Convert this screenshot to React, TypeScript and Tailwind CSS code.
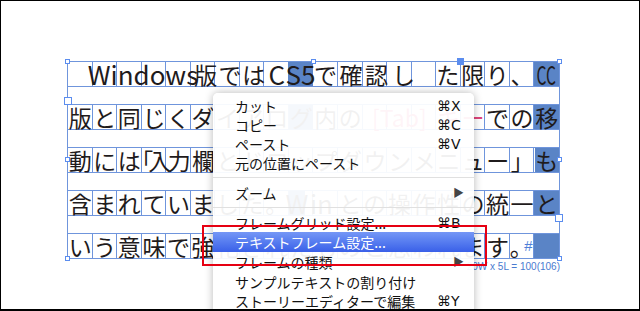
import clsx from "clsx";

const CELL = 24.55;

type Seg = {
  t: string;
  w?: number;
  hl?: boolean;
  pink?: boolean;
  latin?: boolean;
  squeeze?: boolean;
  open?: boolean;
  eof?: boolean;
  left?: boolean;
};

const cells = (s: string, extra: Partial<Seg> = {}): Seg[] =>
  Array.from(s).map((t) => ({ t, ...extra }));

const rows: Seg[][] = [
  [
    { t: "", w: CELL },
    { t: "Windows", w: 101, latin: true },
    { t: "版", w: 24.5 },
    { t: "で", w: 24 },
    { t: "は", w: 23.5 },
    { t: "C", w: 22.5, latin: true },
    { t: "S5", w: 25, latin: true, hl: true },
    { t: "で", w: 25 },
    { t: "確", w: 26 },
    { t: "認", w: 25 },
    { t: "し", w: 29 },
    { t: "", w: 17 },
    { t: "た", w: 25.5 },
    ...cells("限り、"),
    { t: "CC", latin: true, hl: true, squeeze: true },
  ],
  [
    ...cells("版と同じくダイアロ"),
    { t: "グ", hl: true },
    ...cells("内の"),
    { t: "[Tab]", w: CELL * 3, pink: true },
    ...cells("キー", { pink: true }),
    ...cells("での"),
    { t: "移", hl: true },
  ],
  [
    ...cells("動には"),
    { t: "「", w: 11, open: true },
    { t: "入", w: 14.4 },
    { t: "力", w: 24.5 },
    { t: "欄", w: 24 },
    ...cells("とドロップダウンメニュー」"),
    { t: "も", hl: true },
  ],
  [
    ...cells("含まれていました。"),
    { t: "W", w: 16, latin: true, hl: true },
    { t: "in", w: 33.1, latin: true },
    ...cells("との操作性の統一"),
    { t: "と", hl: true },
  ],
  [
    ...cells("いう意味で強化されたものと思われます"),
    { t: "。", w: 12, left: true },
    { t: "#", w: 12.5, eof: true },
    { t: "", hl: true },
  ],
];

type Item =
  | { sep: true }
  | { sep?: false; t: string; k?: string; arrow?: boolean; active?: boolean; gap?: boolean };

const items: Item[] = [
  { t: "カット", k: "⌘X" },
  { t: "コピー", k: "⌘C" },
  { t: "ペースト", k: "⌘V" },
  { t: "元の位置にペースト" },
  { sep: true },
  { t: "ズーム", arrow: true },
  { sep: true },
  { t: "フレームグリッド設定...", k: "⌘B" },
  { t: "テキストフレーム設定...", active: true },
  { t: "フレームの種類", arrow: true },
  { t: "サンプルテキストの割り付け", gap: true },
  { t: "ストーリーエディターで編集", k: "⌘Y" },
];

// handle positions relative to the frame's padding box (x from 68, y from 61)
const handles = [
  { l: -3, t: -2, s: 5 },
  { l: 243, t: -2, s: 5 },
  { l: 389, t: -3, s: 7, fill: true },
  { l: 489, t: -2, s: 5 },
  { l: -4, t: 36, s: 8 },
  { l: -3, t: 96, s: 5 },
  { l: -3, t: 195, s: 5 },
  { l: 243, t: 195, s: 5 },
  { l: 489, t: 96, s: 5 },
  { l: 487, t: 153, s: 8 },
  { l: 489, t: 195, s: 5 },
];

function GridRow({ segs }: { segs: Seg[] }) {
  return (
    <div className="h-[26px] border-y border-[#6f95dc] flex leading-[24px] bg-[repeating-linear-gradient(to_right,transparent_0,transparent_23.55px,#6f95dc_23.55px,#6f95dc_24.55px)]">
      {segs.map((s, i) => {
        const last = i === segs.length - 1;
        return (
          <span
            key={i}
            style={last ? undefined : { width: s.w ?? CELL }}
            className={clsx(
              "h-full shrink-0 flex items-center whitespace-nowrap",
              last && "flex-1 min-w-0",
              s.left ? "justify-start" : "justify-center",
              s.hl && "bg-[#5a84c6]",
              s.pink && "text-[#e0457b]",
              s.latin && "text-[26px]",
              s.eof && "italic text-[15px] text-[#4f7fd8] font-['Liberation_Sans',sans-serif]"
            )}
          >
            {s.squeeze ? (
              <span className="inline-block scale-x-[0.6]">{s.t}</span>
            ) : s.open ? (
              <span className="-ml-[11px]">{s.t}</span>
            ) : (
              s.t
            )}
          </span>
        );
      })}
    </div>
  );
}

export default function App() {
  return (
    <div className="w-[640px] h-[311px] relative overflow-hidden bg-white border border-black border-b-2 pl-[66px] pt-[60px] font-['Noto_Sans_CJK_JP',sans-serif] text-[23px] text-[#1f1b1c]">
      <div className="relative w-[493px] border-x border-[#6f95dc] flex flex-col gap-[17px]">
        {rows.map((r, i) => (
          <GridRow key={i} segs={r} />
        ))}
        {handles.map((h, i) => (
          <span
            key={i}
            style={{ left: h.l, top: h.t, width: h.s, height: h.s }}
            className={clsx(
              "absolute border border-[#5b8def]",
              h.fill ? "bg-[#5b8def]" : "bg-white"
            )}
          />
        ))}
      </div>
      <div className="w-[493px] mt-[2px] text-right text-[10px] leading-[11px] text-[#4a7bd0] font-['Liberation_Sans',sans-serif]">
        20W x 5L = 100(106)
      </div>

      {/* context menu */}
      <div className="absolute left-[212px] top-[92px] w-[261px] h-[230px] rounded-t-[5px] bg-white/[0.94] shadow-[0_0_9px_rgba(0,0,0,0.28)] pt-[3px] text-[14px] text-[#111]">
        {items.map((it, i) =>
          it.sep ? (
            <div key={i} className="h-[11px] flex items-center">
              <div className="h-px w-full bg-[#e0e0e0]" />
            </div>
          ) : (
            <div
              key={i}
              className={clsx(
                "flex items-center justify-between pl-[22px] leading-none",
                it.active
                  ? "h-[20px] bg-linear-to-b from-[#7597f6] to-[#3a5fe8] text-white"
                  : "h-[19px]",
                it.gap && "mt-px"
              )}
            >
              <span>{it.t}</span>
              <span className="w-[37px] flex items-center">
                {it.k && (
                  <span className="font-['DejaVu_Sans',sans-serif] text-[14px]">{it.k}</span>
                )}
                {it.arrow && (
                  <span className="ml-auto mr-[10px] text-[11px] text-[#444]">▶</span>
                )}
              </span>
            </div>
          )
        )}
      </div>

      <div className="absolute left-[201px] top-[224px] w-[285px] h-[41px] border-2 border-[#e60012]" />
    </div>
  );
}
